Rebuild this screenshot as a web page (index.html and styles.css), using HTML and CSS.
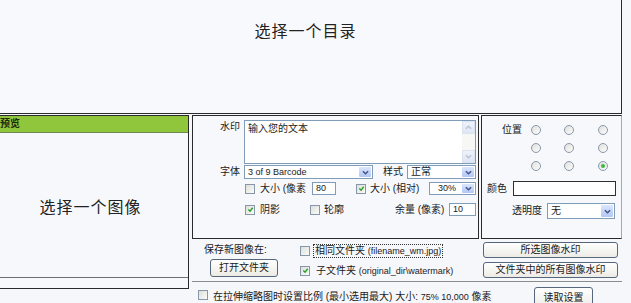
FILE: index.html
```html
<!DOCTYPE html>
<html lang="zh">
<head>
  <meta charset="UTF-8" />
  <title>图像水印</title>
  <link rel="stylesheet" href="styles.css">
</head>
<body>
  <div class="top">
    <span class="hint hint-top">选择一个目录</span>
  </div>

  <div class="main">
    <div class="preview">
      <div class="preview-head">预览</div>
      <div class="preview-body"><span class="hint">选择一个图像</span></div>
      <div class="preview-status"></div>
    </div>

    <div class="side">
      <div class="panels">
        <!-- watermark text settings -->
        <div class="box settings">
          <div class="s-row row-text">
            <span class="lbl">水印</span>
            <div class="memo">
              <div class="memo-text">输入您的文本</div>
              <div class="memo-scroll">
                <span class="sb-btn"><svg viewBox="0 0 8 5"><path d="M1 4l3-3 3 3" /></svg></span>
                <span class="sb-btn"><svg viewBox="0 0 8 5"><path d="M1 1l3 3 3-3" /></svg></span>
              </div>
            </div>
          </div>

          <div class="s-row row-font">
            <span class="lbl">字体</span>
            <div class="select sel-font">
              <span class="val latin">3 of 9 Barcode</span>
              <span class="arrow"><svg viewBox="0 0 8 5"><path d="M1 1l3 3 3-3" /></svg></span>
            </div>
            <span class="lbl-inline">样式</span>
            <div class="select sel-style">
              <span class="val">正常</span>
              <span class="arrow"><svg viewBox="0 0 8 5"><path d="M1 1l3 3 3-3" /></svg></span>
            </div>
          </div>

          <div class="s-row row-size">
            <span class="cb cb-first"></span>
            <span class="txt w-px">大小 (像素</span>
            <span class="field f-px latin">80</span>
            <span class="cb on cb-rel"><svg viewBox="0 0 8 8"><path d="M1.5 4l2 2 3-4" /></svg></span>
            <span class="txt w-rel">大小 (相对)</span>
            <div class="select sel-pct">
              <span class="val latin">30%</span>
              <span class="arrow"><svg viewBox="0 0 8 5"><path d="M1 1l3 3 3-3" /></svg></span>
            </div>
          </div>

          <div class="s-row row-fx">
            <span class="cb on cb-first"><svg viewBox="0 0 8 8"><path d="M1.5 4l2 2 3-4" /></svg></span>
            <span class="txt w-shadow">阴影</span>
            <span class="cb"></span>
            <span class="txt w-outline">轮廓</span>
            <span class="txt w-margin">余量 (像素)</span>
            <span class="field f-margin latin">10</span>
          </div>
        </div>

        <!-- position / colour -->
        <div class="box position">
          <div class="p-row row-pos1">
            <span class="lbl-pos">位置</span>
            <span class="rd"></span><span class="rd"></span><span class="rd"></span>
          </div>
          <div class="p-row row-pos2">
            <span class="lbl-pos"></span>
            <span class="rd"></span><span class="rd"></span><span class="rd"></span>
          </div>
          <div class="p-row row-pos3">
            <span class="lbl-pos"></span>
            <span class="rd"></span><span class="rd"></span><span class="rd on"><i class="dot"></i></span>
          </div>
          <div class="p-row row-color">
            <span class="lbl-color">颜色</span>
            <span class="color-box"></span>
          </div>
          <div class="p-row row-alpha">
            <span class="lbl-alpha">透明度</span>
            <div class="select sel-alpha">
              <span class="val">无</span>
              <span class="arrow"><svg viewBox="0 0 8 5"><path d="M1 1l3 3 3-3" /></svg></span>
            </div>
          </div>
        </div>
      </div>

      <div class="save">
        <div class="save-where">
          <span class="save-lbl">保存新图像在:</span>
          <button class="btn btn-open">打开文件夹</button>
        </div>
        <div class="save-opts">
          <div class="opt opt-same">
            <span class="cb"></span>
            <span class="focus">相同文件夹 <span class="latin">(filename_wm.jpg)</span></span>
          </div>
          <div class="opt opt-sub">
            <span class="cb on"><svg viewBox="0 0 8 8"><path d="M1.5 4l2 2 3-4" /></svg></span>
            <span class="opt-txt">子文件夹 <span class="latin">(original_dir\watermark)</span></span>
          </div>
        </div>
        <div class="save-btns">
          <button class="btn btn-wide">所选图像水印</button>
          <button class="btn btn-wide btn-all">文件夹中的所有图像水印</button>
        </div>
      </div>

      <div class="options">
        <span class="cb cb-keep"></span>
        <span class="keep-txt">在拉伸缩略图时设置比例 (最小选用最大) 大小: <span class="latin">75%  10,000</span> 像素</span>
        <button class="btn btn-read">读取设置</button>
      </div>
    </div>
  </div>
</body>
</html>
```

FILE: styles.css
```css
body {
  margin: 0;
  width: 631px;
  height: 303px;
  overflow: hidden;
  background: #f6f7fb;
  color: #1a1a1a;
  font-family: "Liberation Sans", "Noto Sans CJK SC", sans-serif;
  font-size: 10px;
  line-height: 12px;
}

.latin {
  font-family: "Liberation Sans", sans-serif;
  font-size: 9px;
}

svg {
  display: block;
}

/* top folder area */
.top {
  margin-left: -10px;
  width: 631px;
  height: 113px;
  border-right: 1px solid #2a2a2a;
  border-bottom: 1px solid #2a2a2a;
  background: #f8f9fd;
  text-align: center;
}

.hint {
  font-size: 16px;
  line-height: 16px;
  letter-spacing: 1px;
  color: #222;
}

.hint-top {
  display: inline-block;
  margin-top: 24px;
}

.main {
  display: flex;
  margin-top: 1px;
}

/* preview */
.preview {
  margin-left: -8px;
  width: 195px;
  height: 172px;
  border: 1px solid #2a2a2a;
  display: flex;
  flex-direction: column;
  background: #f7f8fc;
}

.preview-head {
  height: 16px;
  line-height: 16px;
  padding-left: 7px;
  background: #8fc63c;
  border-bottom: 1px solid #6d8a55;
  font-weight: bold;
  color: #1e2a10;
}

.preview-body {
  flex: 1;
  display: flex;
  align-items: center;
  justify-content: center;
  padding-top: 6px;
}

.preview-status {
  height: 10px;
  border-top: 1px solid #707070;
}

/* right column */
.side {
  margin-left: 3px;
  width: 430px;
  display: flex;
  flex-direction: column;
}

.panels {
  display: flex;
  height: 124px;
}

.box {
  height: 122px;
  border: 1px solid #2a2a2a;
  background: #f7f8fc;
}

.settings {
  width: 285px;
}

.position {
  margin-left: 2px;
  width: 139px;
  border-right-color: #a8a8a8;
}

.s-row,
.p-row {
  display: flex;
  align-items: center;
}

.lbl {
  flex: none;
  width: 47px;
  margin-right: 4px;
  text-align: right;
}

.row-text {
  margin-top: 4px;
  align-items: flex-start;
}

.row-text .lbl {
  margin-top: 1px;
}

.memo {
  display: flex;
  width: 232px;
  height: 44px;
  box-sizing: border-box;
  border: 1px solid #7f9db9;
  background: #fff;
}

.memo-text {
  flex: 1;
  padding: 2px 3px;
}

.memo-scroll {
  width: 13px;
  display: flex;
  flex-direction: column;
  justify-content: space-between;
  background: #f7f7f5;
}

.sb-btn {
  height: 13px;
  display: flex;
  align-items: center;
  justify-content: center;
  background: linear-gradient(#eef2fb, #dfe6f3);
  border: 1px solid #dbe3f0;
  box-sizing: border-box;
}

.sb-btn svg {
  width: 7px;
  height: 5px;
  fill: none;
  stroke: #b8c2d2;
  stroke-width: 1.5;
}

.select {
  display: flex;
  box-sizing: border-box;
  border: 1px solid #7f9db9;
  background: #fff;
}

.select .val {
  flex: 1;
  padding-left: 3px;
  white-space: nowrap;
  overflow: hidden;
}

.select .arrow {
  width: 12px;
  margin: 1px;
  display: flex;
  align-items: center;
  justify-content: center;
  background: linear-gradient(#dbe6fc, #b3c7f5);
  border-radius: 1px;
}

.select .arrow svg {
  width: 7px;
  height: 5px;
  fill: none;
  stroke: #3f5488;
  stroke-width: 1.7;
}

.row-font {
  margin-top: 1px;
  height: 14px;
}

.sel-font {
  width: 129px;
  height: 14px;
  line-height: 12px;
}

.lbl-inline {
  width: 24px;
  margin-left: 10px;
}

.sel-style {
  width: 69px;
  height: 14px;
  line-height: 12px;
}

.cb {
  flex: none;
  width: 10px;
  height: 10px;
  box-sizing: border-box;
  border: 1px solid #8796ab;
  background: linear-gradient(135deg, #dedfd9, #fbfbf9);
  display: flex;
  align-items: center;
  justify-content: center;
}

.cb svg {
  width: 7px;
  height: 7px;
  fill: none;
  stroke: #24a326;
  stroke-width: 1.6;
}

.txt {
  flex: none;
  white-space: nowrap;
}

.field {
  box-sizing: border-box;
  border: 1px solid #7f9db9;
  background: #fff;
  padding-left: 3px;
}

.row-size {
  margin-top: 3px;
  height: 13px;
}

.cb-first {
  margin-left: 52px;
}

.w-px {
  width: 52px;
  margin-left: 5px;
}

.f-px {
  width: 24px;
  height: 13px;
  line-height: 11px;
}

.cb-rel {
  margin-left: 20px;
}

.w-rel {
  width: 59px;
  margin-left: 4px;
}

.sel-pct {
  width: 47px;
  height: 13px;
  line-height: 11px;
}

.sel-pct .val {
  padding-left: 8px;
}

.row-fx {
  margin-top: 8px;
  height: 13px;
}

.w-shadow {
  width: 50px;
  margin-left: 5px;
}

.w-outline {
  width: 71px;
  margin-left: 4px;
}

.w-margin {
  width: 54px;
}

.f-margin {
  width: 27px;
  height: 13px;
  line-height: 11px;
}

/* position panel */
.rd {
  flex: none;
  width: 10px;
  height: 10px;
  margin-left: 23px;
  box-sizing: border-box;
  border: 1px solid #8898ad;
  border-radius: 50%;
  background: linear-gradient(135deg, #dfe0db, #fdfdfc);
  display: flex;
  align-items: center;
  justify-content: center;
}

.rd:nth-child(2) {
  margin-left: 9px;
}

.rd:nth-child(4) {
  margin-left: 24px;
}

.dot {
  width: 4px;
  height: 4px;
  border-radius: 50%;
  background: #3cb93e;
}

.lbl-pos {
  flex: none;
  width: 40px;
  text-align: right;
}

.row-pos1 {
  margin-top: 9px;
  height: 10px;
}

.row-pos2,
.row-pos3 {
  margin-top: 8px;
  height: 10px;
}

.row-color {
  margin-top: 10px;
  height: 15px;
}

.lbl-color {
  width: 26px;
  margin-left: 5px;
}

.color-box {
  width: 103px;
  height: 15px;
  box-sizing: border-box;
  border: 1px solid #2f2f2f;
  background: #fff;
}

.row-alpha {
  margin-top: 7px;
  height: 16px;
}

.lbl-alpha {
  width: 60px;
  text-align: right;
  margin-right: 5px;
}

.sel-alpha {
  width: 68px;
  height: 16px;
  line-height: 14px;
}

/* save options */
.save {
  display: flex;
  height: 42px;
  border-bottom: 1px solid #8c8c8c;
}

.save-where {
  width: 100px;
  display: flex;
  flex-direction: column;
}

.save-lbl {
  margin: 5px 0 0 12px;
}

.btn {
  padding: 0;
  font: inherit;
  color: #1a1a1a;
  box-sizing: border-box;
  border: 1px solid #56667d;
  border-radius: 3px;
  background: linear-gradient(#ffffff, #ecebe5);
  text-align: center;
}

.btn-open {
  margin: 3px 0 0 18px;
  width: 68px;
  height: 18px;
}

.save-opts {
  width: 183px;
  margin-left: 8px;
}

.opt {
  display: flex;
  align-items: center;
  height: 13px;
}

.opt-same {
  margin-top: 5px;
}

.opt-sub {
  margin-top: 7px;
}

.focus {
  margin-left: 4px;
  padding: 0 1px;
  outline: 1px dotted #333;
  white-space: nowrap;
}

.opt-txt {
  margin-left: 6px;
  white-space: nowrap;
}

.save-btns {
  width: 135px;
  display: flex;
  flex-direction: column;
}

.btn-wide {
  width: 135px;
  height: 16px;
  margin-top: 3px;
}

.btn-all {
  margin-top: 4px;
}

/* bottom option row */
.options {
  display: flex;
  align-items: flex-start;
}

.cb-keep {
  margin: 8px 0 0 6px;
}

.keep-txt {
  margin: 9px 0 0 5px;
  width: 321px;
  white-space: nowrap;
  overflow: hidden;
}

.btn-read {
  margin-top: 5px;
  width: 59px;
  height: 22px;
}
```
